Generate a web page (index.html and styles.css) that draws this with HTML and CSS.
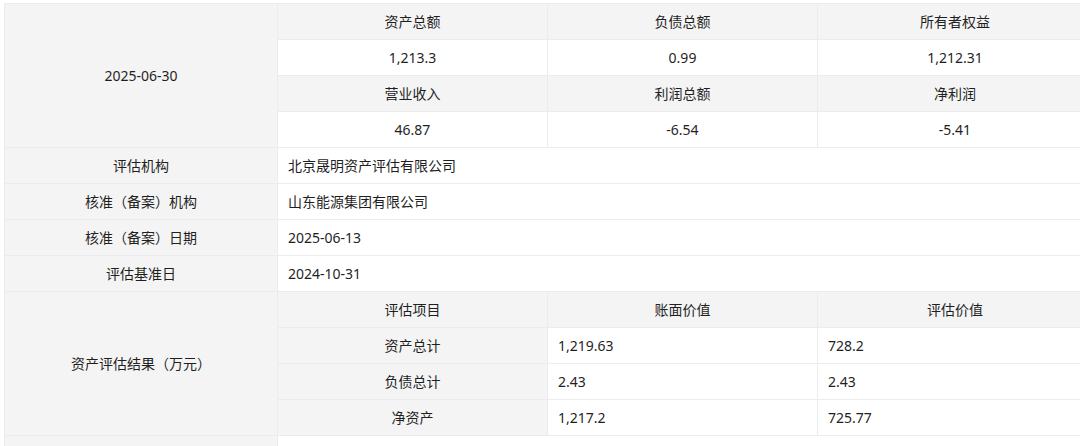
FILE: index.html
```html
<!DOCTYPE html>
<html lang="zh">
<head>
<meta charset="utf-8">
<title>资产评估</title>
<link rel="stylesheet" href="styles.css">
</head>
<body>
<table class="info">
  <colgroup>
    <col class="c-label">
    <col class="c-a">
    <col class="c-b">
    <col class="c-c">
  </colgroup>
  <tbody>
    <tr class="head">
      <td class="label" rowspan="4">2025-06-30</td>
      <td class="center">资产总额</td>
      <td class="center">负债总额</td>
      <td class="center">所有者权益</td>
    </tr>
    <tr class="val">
      <td class="center">1,213.3</td>
      <td class="center">0.99</td>
      <td class="center">1,212.31</td>
    </tr>
    <tr class="head">
      <td class="center">营业收入</td>
      <td class="center">利润总额</td>
      <td class="center">净利润</td>
    </tr>
    <tr class="val">
      <td class="center">46.87</td>
      <td class="center">-6.54</td>
      <td class="center">-5.41</td>
    </tr>
    <tr>
      <td class="label">评估机构</td>
      <td class="text" colspan="3">北京晟明资产评估有限公司</td>
    </tr>
    <tr>
      <td class="label">核准（备案）机构</td>
      <td class="text" colspan="3">山东能源集团有限公司</td>
    </tr>
    <tr>
      <td class="label">核准（备案）日期</td>
      <td class="text" colspan="3">2025-06-13</td>
    </tr>
    <tr>
      <td class="label">评估基准日</td>
      <td class="text" colspan="3">2024-10-31</td>
    </tr>
    <tr class="head">
      <td class="label" rowspan="4">资产评估结果（万元）</td>
      <td class="center">评估项目</td>
      <td class="center">账面价值</td>
      <td class="center">评估价值</td>
    </tr>
    <tr>
      <td class="sub">资产总计</td>
      <td class="text">1,219.63</td>
      <td class="text">728.2</td>
    </tr>
    <tr>
      <td class="sub">负债总计</td>
      <td class="text">2.43</td>
      <td class="text">2.43</td>
    </tr>
    <tr>
      <td class="sub">净资产</td>
      <td class="text">1,217.2</td>
      <td class="text">725.77</td>
    </tr>
    <tr>
      <td class="label"></td>
      <td class="text" colspan="3"></td>
    </tr>
  </tbody>
</table>
</body>
</html>
```

FILE: styles.css
```css
html {
  overflow: hidden;
  background: #ffffff;
}

body {
  margin: 0;
  padding: 3px 0 0 4px;
  font-family: "Noto Sans", "Noto Sans CJK SC", sans-serif;
  font-size: 14px;
  color: #1f1f1f;
}

.info {
  border-collapse: collapse;
  table-layout: fixed;
  width: 1088px;
}

.c-label { width: 273px; }
.c-a { width: 270px; }
.c-b { width: 270px; }
.c-c { width: 275px; }

.info tr {
  height: 36px;
}

.info td {
  border: 1px solid #ececec;
  padding: 0 10px;
  line-height: 20px;
  vertical-align: middle;
  background: #ffffff;
  white-space: nowrap;
}

.info td.label {
  background: #f4f4f4;
  text-align: center;
}

.info tr.head td {
  background: #f4f4f4;
}

.info td.center {
  text-align: center;
}

.info td.sub {
  background: #f4f4f4;
  text-align: center;
}

.info td.text {
  text-align: left;
}
```
